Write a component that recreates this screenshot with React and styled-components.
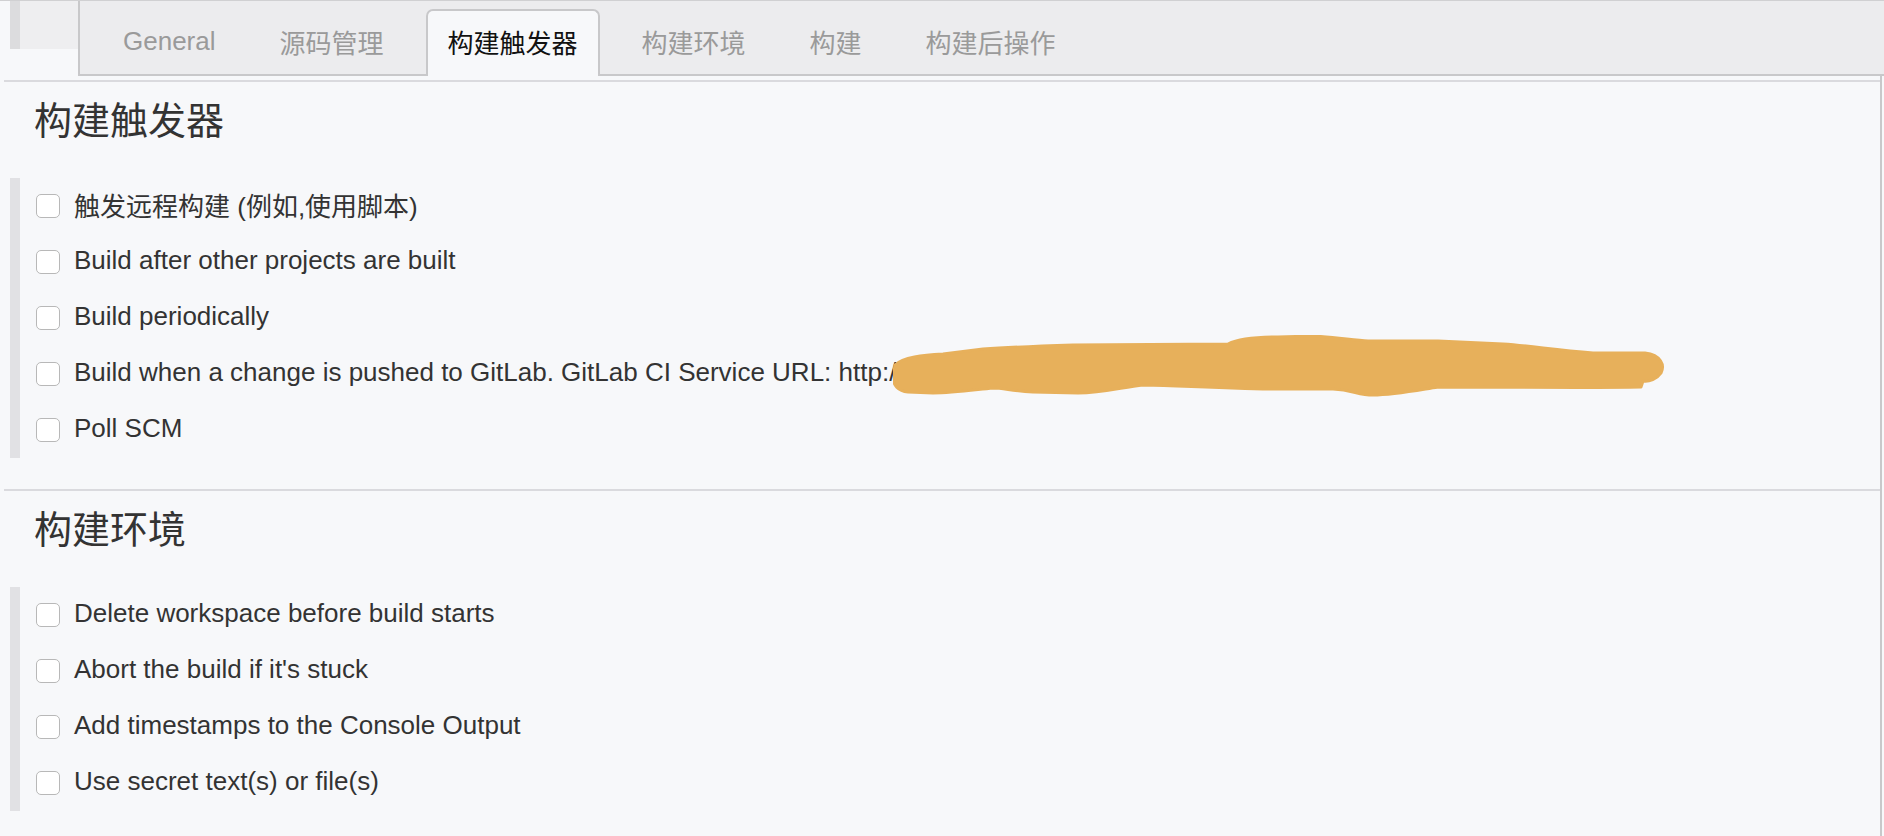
import React from 'react'
import styled, { createGlobalStyle } from 'styled-components'

const font = '"Liberation Sans", "Noto Sans CJK SC", sans-serif'

const GlobalStyle = createGlobalStyle`
  html, body {
    margin: 0;
    padding: 0;
    background: #f7f8fa;
  }
  body {
    font-family: ${font};
    color: #333;
  }
`

const Page = styled.div`
  display: flex;
  flex-direction: column;
  height: 836px;
  overflow: hidden;
  background: #f7f8fa;
`

const TabStrip = styled.div`
  display: flex;
  border-top: 1px solid #d0d0d2;
`

const Stub = styled.div`
  width: 78px;
  flex-shrink: 0;
`

const StubTop = styled.div`
  height: 48px;
  margin-left: 10px;
  border-left: 10px solid #dcdcde;
  background: #eeeef0;
`

const Tabs = styled.div`
  flex: 1;
  display: flex;
  align-items: flex-end;
  gap: 20px;
  height: 73px;
  padding-left: 21px;
  background: #ececee;
  border-left: 2px solid #c8c8ca;
  border-bottom: 2px solid #c8c8ca;
`

const Tab = styled.div`
  box-sizing: border-box;
  height: 67px;
  margin-bottom: -2px;
  padding: 0 20px 5px;
  display: flex;
  align-items: center;
  font-size: 26px;
  white-space: nowrap;
  border: 2px solid ${(p) => (p.$active ? '#c8c8ca' : 'transparent')};
  border-bottom: none;
  border-radius: 7px 7px 0 0;
  background: ${(p) => (p.$active ? '#f7f8fa' : 'transparent')};
  color: ${(p) => (p.$active ? '#111' : '#9a9a9a')};
`

const Body = styled.div`
  flex: 1;
  padding: 4px 0 0 4px;
  margin-right: 2px;
  border-right: 2px solid #c8c8ca;
`

const Section = styled.section`
  border-top: 2px solid #dadade;
  padding-bottom: 31px;
`

const Title = styled.h2`
  margin: 0;
  padding: 17px 0 0 30px;
  font-size: 38px;
  line-height: 44px;
  font-weight: normal;
  color: #333;
`

const List = styled.div`
  margin: 35px 0 0 6px;
  border-left: 10px solid #e1e1e4;
`

const Row = styled.label`
  box-sizing: border-box;
  display: flex;
  align-items: center;
  height: 56px;
  padding: 0 0 3px 16px;
  font-size: 26px;
  color: #333;
  white-space: nowrap;
`

const Box = styled.span`
  box-sizing: border-box;
  width: 24px;
  height: 24px;
  margin: 3px 14px 0 0;
  flex-shrink: 0;
  border: 1.5px solid #b8b8b8;
  border-radius: 5px;
  background: #fff;
`

const Redaction = styled.svg`
  margin: -11px 0 0 -3px;
  flex-shrink: 0;
`

const tabs = ['General', '源码管理', '构建触发器', '构建环境', '构建', '构建后操作']

const Blob = () => (
  <Redaction width={772} height={64} viewBox='0 0 772 64'>
    <path
      fill='#e7b05b'
      stroke='#e7b05b'
      strokeWidth={3}
      strokeLinejoin='round'
      d='M2 30 C10 22 30 20 50 19 L90 14 C120 12 150 11 180 10 L335 9 C345 4 360 2 385 2 L420 1 C440 2 460 5 475 6 L545 6 L610 9 C640 11 660 15 700 18 L752 18 C768 20 772 30 768 38 C764 44 756 47 750 46 L748 52 C700 53 600 52 545 52 C520 56 500 60 480 60 C465 60 460 55 440 54 L370 54 C300 52 270 50 250 50 C230 52 210 58 185 58 L140 57 C120 56 110 53 100 53 C80 55 60 58 40 58 L15 57 C5 56 0 50 0 42 Z'
    />
  </Redaction>
)

const Option = ({ children }) => (
  <Row>
    <Box />
    {children}
  </Row>
)

const App = () => {
  return (
    <Page>
      <GlobalStyle />
      <TabStrip>
        <Stub>
          <StubTop />
        </Stub>
        <Tabs>
          {tabs.map((t) => (
            <Tab key={t} $active={t === '构建触发器'}>
              {t}
            </Tab>
          ))}
        </Tabs>
      </TabStrip>
      <Body>
        <Section>
          <Title>构建触发器</Title>
          <List>
            <Option>触发远程构建 (例如,使用脚本)</Option>
            <Option>Build after other projects are built</Option>
            <Option>Build periodically</Option>
            <Option>
              Build when a change is pushed to GitLab. GitLab CI Service URL: http:/
              <Blob />
            </Option>
            <Option>Poll SCM</Option>
          </List>
        </Section>
        <Section>
          <Title>构建环境</Title>
          <List>
            <Option>Delete workspace before build starts</Option>
            <Option>Abort the build if it's stuck</Option>
            <Option>Add timestamps to the Console Output</Option>
            <Option>Use secret text(s) or file(s)</Option>
          </List>
        </Section>
      </Body>
    </Page>
  )
}

export default App
